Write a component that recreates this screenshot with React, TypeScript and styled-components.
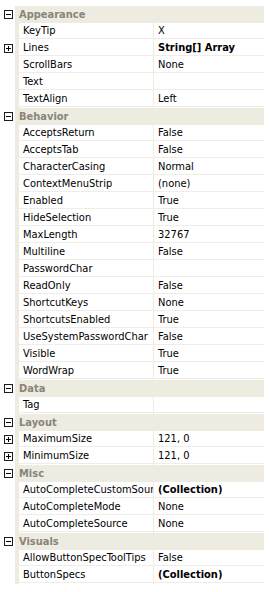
import React from "react";
import styled, { createGlobalStyle } from "styled-components";

const GlobalStyle = createGlobalStyle`
  html, body {
    margin: 0;
    padding: 0;
    background: #ffffff;
  }
  body {
    font-family: "DejaVu Sans Condensed", "DejaVu Sans", "Liberation Sans", sans-serif;
    font-size: 11px;
    color: #000000;
  }
`;

const Grid = styled.div`
  width: 264px;
  padding-top: 6px;
  display: flex;
  flex-direction: column;
`;

const Row = styled.div`
  display: flex;
  height: 17px;
`;

const Gutter = styled.div`
  width: 15px;
  flex: none;
  display: flex;
  align-items: center;
  padding-left: 4px;
  box-sizing: border-box;
  background: #ffffff;
`;

const Expander = styled.div`
  width: 9px;
  height: 9px;
  box-sizing: border-box;
  border: 1px solid #1c1c1c;
  background: #ffffff;
  position: relative;
  &::before {
    content: "";
    position: absolute;
    left: 1px;
    top: 3px;
    width: 5px;
    height: 1px;
    background: #000;
  }
  &::after {
    content: "";
    display: ${(p: { open: boolean }) => (p.open ? "none" : "block")};
    position: absolute;
    left: 3px;
    top: 1px;
    width: 1px;
    height: 5px;
    background: #000;
  }
`;

const CategoryBand = styled.div`
  flex: 1;
  background: #eeebe0;
  padding-left: 4px;
  display: flex;
  align-items: center;
  font-weight: bold;
  color: #88857a;
`;

const Strip = styled.div`
  width: 4px;
  flex: none;
  background: #eeebe0;
`;

const Cell = styled.div<{ w?: number; bold?: boolean }>`
  ${(p) => (p.w ? `width: ${p.w}px; flex: none;` : "flex: 1;")}
  height: 16px;
  line-height: 16px;
  padding-left: 4px;
  box-sizing: border-box;
  overflow: hidden;
  white-space: nowrap;
  border-bottom: 1px solid #efede6;
  font-weight: ${(p) => (p.bold ? "bold" : "normal")};
`;

const Divider = styled.div`
  width: 1px;
  flex: none;
  background: #eeebe0;
`;

type Prop = { name: string; value: string; bold?: boolean; expand?: boolean };
type Category = { title: string; items: Prop[] };

const data: Category[] = [
  {
    title: "Appearance",
    items: [
      { name: "KeyTip", value: "X" },
      { name: "Lines", value: "String[] Array", bold: true, expand: true },
      { name: "ScrollBars", value: "None" },
      { name: "Text", value: "" },
      { name: "TextAlign", value: "Left" },
    ],
  },
  {
    title: "Behavior",
    items: [
      { name: "AcceptsReturn", value: "False" },
      { name: "AcceptsTab", value: "False" },
      { name: "CharacterCasing", value: "Normal" },
      { name: "ContextMenuStrip", value: "(none)" },
      { name: "Enabled", value: "True" },
      { name: "HideSelection", value: "True" },
      { name: "MaxLength", value: "32767" },
      { name: "Multiline", value: "False" },
      { name: "PasswordChar", value: "" },
      { name: "ReadOnly", value: "False" },
      { name: "ShortcutKeys", value: "None" },
      { name: "ShortcutsEnabled", value: "True" },
      { name: "UseSystemPasswordChar", value: "False" },
      { name: "Visible", value: "True" },
      { name: "WordWrap", value: "True" },
    ],
  },
  { title: "Data", items: [{ name: "Tag", value: "" }] },
  {
    title: "Layout",
    items: [
      { name: "MaximumSize", value: "121, 0", expand: true },
      { name: "MinimumSize", value: "121, 0", expand: true },
    ],
  },
  {
    title: "Misc",
    items: [
      { name: "AutoCompleteCustomSource", value: "(Collection)", bold: true },
      { name: "AutoCompleteMode", value: "None" },
      { name: "AutoCompleteSource", value: "None" },
    ],
  },
  {
    title: "Visuals",
    items: [
      { name: "AllowButtonSpecToolTips", value: "False" },
      { name: "ButtonSpecs", value: "(Collection)", bold: true },
    ],
  },
];

const App: React.FC = () => {
  return (
    <>
      <GlobalStyle />
      <Grid>
        {data.map((cat) => (
          <React.Fragment key={cat.title}>
            <Row>
              <Gutter>
                <Expander open />
              </Gutter>
              <CategoryBand>{cat.title}</CategoryBand>
            </Row>
            {cat.items.map((it) => (
              <Row key={it.name}>
                <Gutter>{it.expand && <Expander open={false} />}</Gutter>
                <Strip />
                <Cell w={134}>{it.name}</Cell>
                <Divider />
                <Cell bold={it.bold}>{it.value}</Cell>
              </Row>
            ))}
          </React.Fragment>
        ))}
      </Grid>
    </>
  );
};

export default App;
